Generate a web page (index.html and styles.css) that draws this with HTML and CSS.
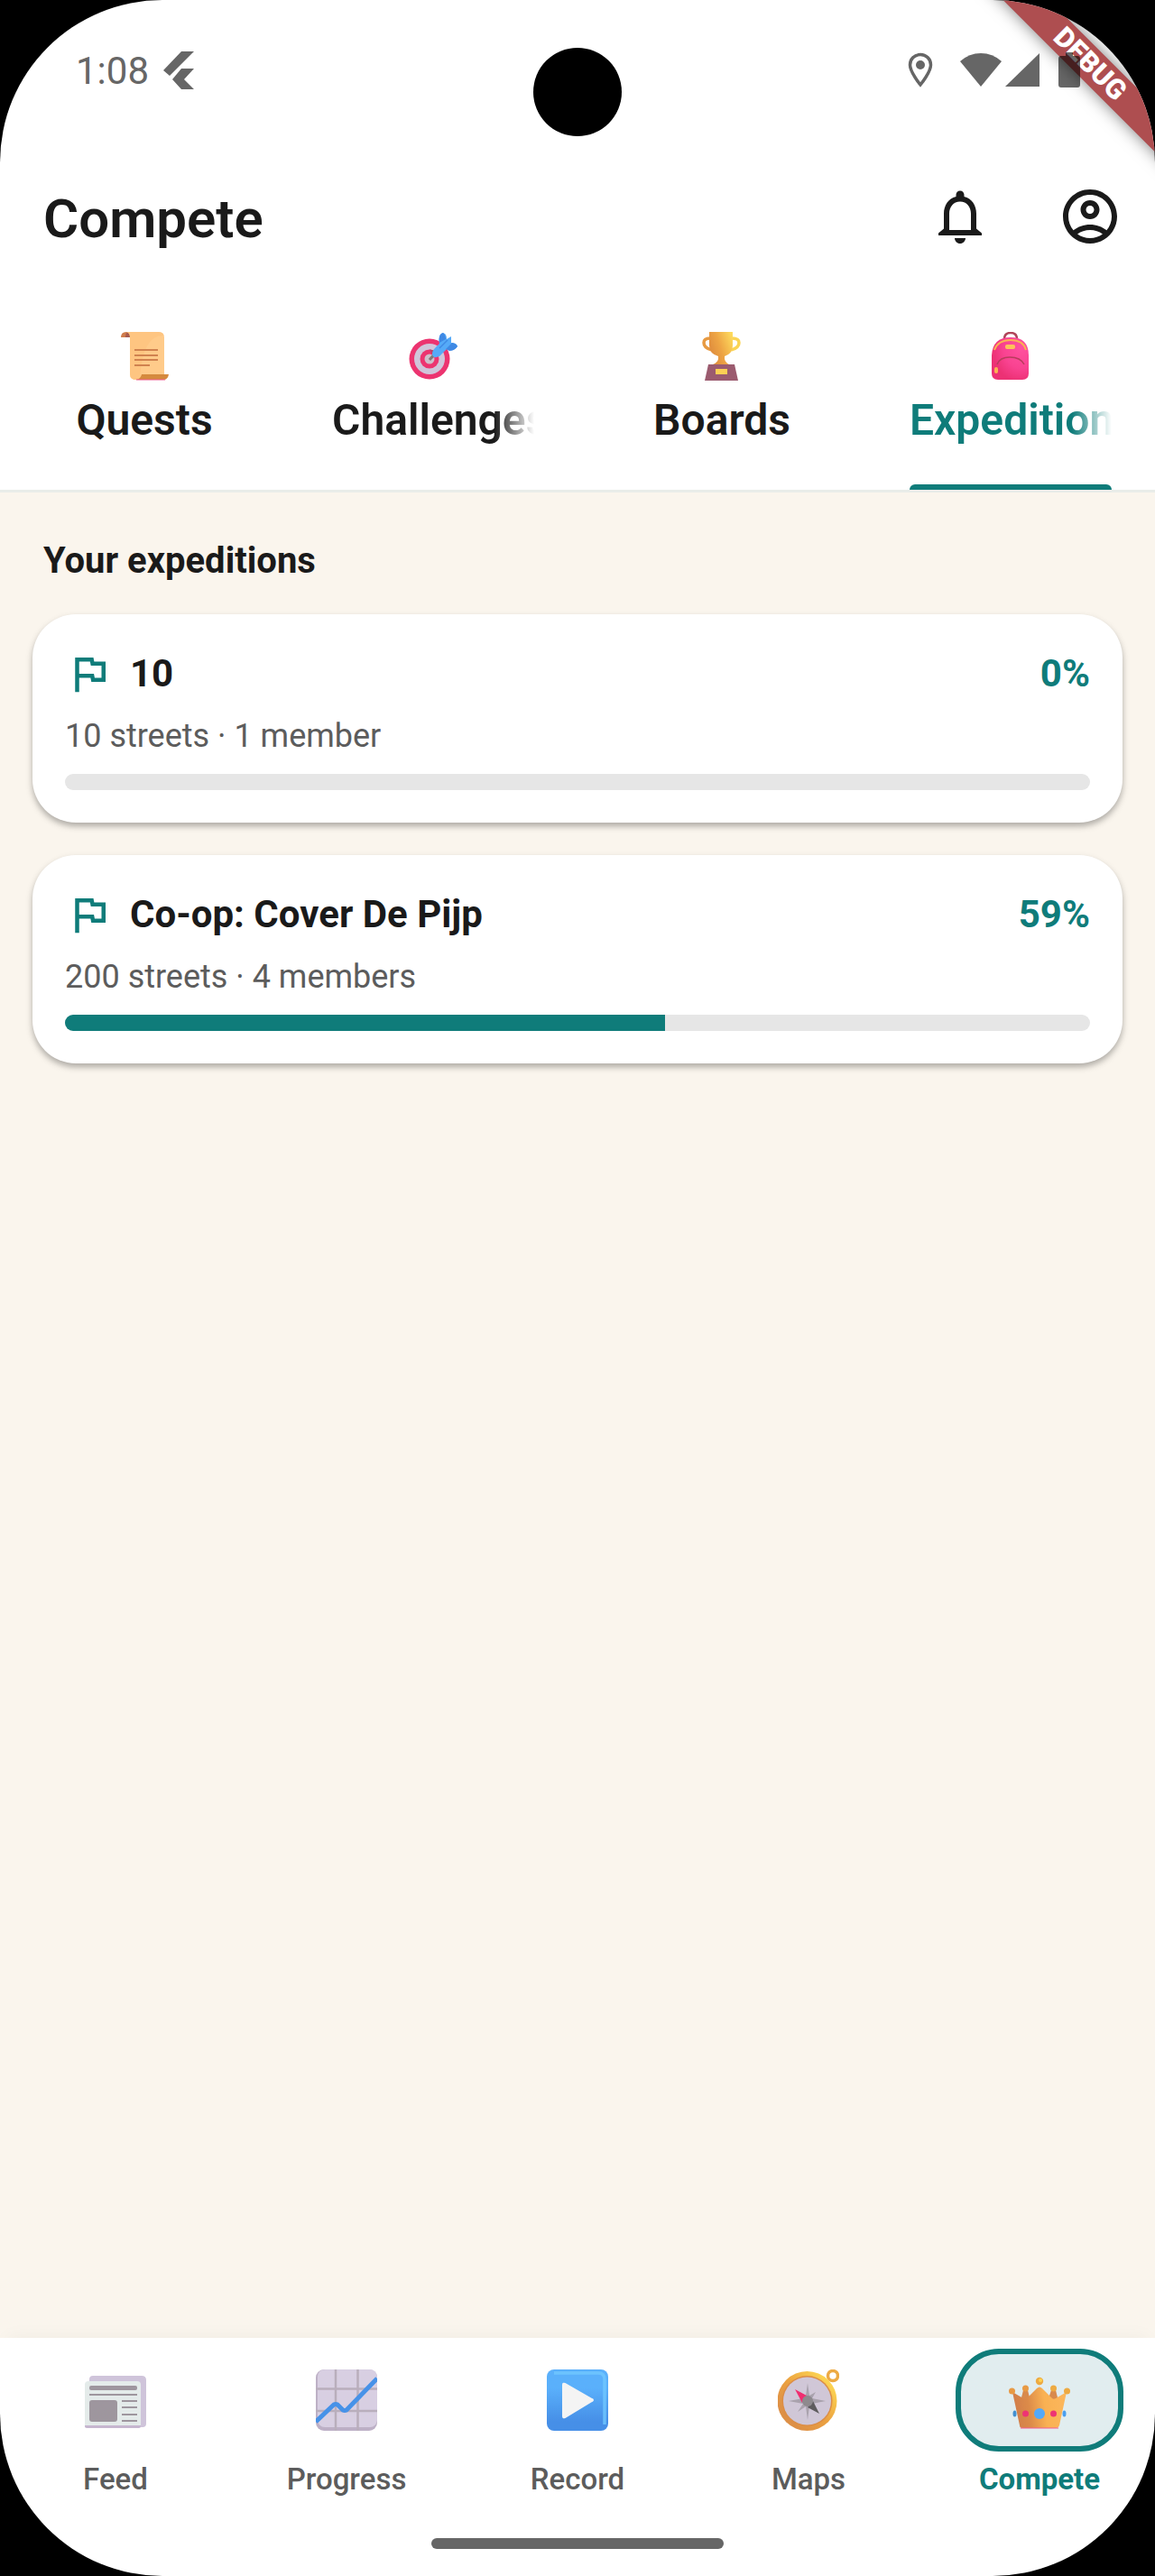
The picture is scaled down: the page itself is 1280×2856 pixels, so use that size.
FILE: index.html
```html
<!DOCTYPE html>
<html lang="en">
  <head>
    <meta charset="UTF-8" />
    <meta name="viewport" content="width=device-width, initial-scale=1.0" />
    <title>Compete</title>
    <link rel="stylesheet" href="styles.css">
  </head>
  <body>
    <div class="screen">
      <div class="debug-banner">DEBUG</div>
      <div class="camera"></div>

      <div class="status-bar">
        <span class="time">1:08</span>
        <svg class="flutter-icon" width="34" height="42" viewBox="0 0 34 42"><path d="M20 0h14L7 27 0 21zM20 19h14L23 31l11 11H20L10 31z" /></svg>
        <div class="status-icons">
          <svg width="28" height="40" viewBox="0 0 28 40">
            <path d="M14 2.500C7.500 2.500 2.500 7.500 2.500 14c0 8 11.500 22 11.500 22s11.500-14 11.500-22c0-6.500-5-11.500-11.500-11.500z" fill="none" stroke="#666" stroke-width="3.500" />
            <circle cx="14" cy="14" r="5" />
          </svg>
          <svg class="wifi" width="46" height="40" viewBox="0 0 46 40"><path d="M0 10Q10 1 23 1t23 9L23 38z" /></svg>
          <svg class="signal" width="38" height="40" viewBox="0 0 38 40"><path d="M38 1v37H0z" /></svg>
          <svg class="battery" width="24" height="40" viewBox="0 0 24 40"><path d="M8 0h8v4h5q3 0 3 3v29q0 3-3 3H3q-3 0-3-3V7q0-3 3-3h5z" /></svg>
        </div>
      </div>

      <header class="app-bar">
        <h1>Compete</h1>
        <button class="icon-button" aria-label="Notifications">
          <svg width="72" height="72" viewBox="0 0 24 24"><path d="M12 22c1.100 0 2-.9 2-2h-4c0 1.100.9 2 2 2zM18 16.500V11c0-3.070-1.630-5.640-4.500-6.320V4c0-.83-.67-1.500-1.500-1.500s-1.500.67-1.500 1.500v.68C7.640 5.360 6 7.920 6 11v5.500L4 18.200V19h16v-.8zM16 17H8v-6c0-2.480 1.510-4.500 4-4.500s4 2.020 4 4.500z" /></svg>
        </button>
        <button class="icon-button" aria-label="Account">
          <svg width="72" height="72" viewBox="0 0 24 24"><path d="M12 2C6.480 2 2 6.480 2 12s4.480 10 10 10 10-4.480 10-10S17.520 2 12 2zM7.350 18.500C8.660 17.560 10.260 17 12 17s3.340.56 4.650 1.500C15.340 19.440 13.740 20 12 20s-3.340-.56-4.650-1.500zm10.790-1.380C16.450 15.800 14.320 15 12 15s-4.450.8-6.140 2.120C4.700 15.730 4 13.950 4 12c0-4.420 3.580-8 8-8s8 3.580 8 8c0 1.950-.7 3.730-1.860 5.120z" /><path d="M12 6c-1.930 0-3.500 1.570-3.500 3.500S10.070 13 12 13s3.500-1.570 3.500-3.500S13.930 6 12 6zm0 5c-.83 0-1.500-.67-1.500-1.500S11.170 8 12 8s1.500.67 1.500 1.500S12.830 11 12 11z" /></svg>
        </button>
      </header>

      <div class="tabs" role="tablist">
        <button class="tab" role="tab">
          <svg width="54" height="54" viewBox="0 0 54 54">
            <path d="M1 6Q1 0 7 0h6v6z" fill="#cf7c4c" />
            <path d="M6 6q0-5 3-6l3 6z" fill="#a85a4e" />
            <path d="M7 0h36q6 0 6 6v43H24q-2 4-6 4-7 0-7-6V6q0-5-4-6z" fill="#ffcb8a" />
            <path d="M7 0h36q4 0 5.500 4Q25 3 22 52q-2 1-4 1-7 0-7-6V6q0-5-4-6z" fill="#fdc27c" opacity=".6" />
            <path d="M24 47h30q-1 6-6 6H18q5-1 6-6z" fill="#d58a3e" />
            <path d="M18 53h32" stroke="#ee5a8c" />
            <path d="M16 20h26M16 26h26M16 31h26M16 37h17" stroke="#d0824f" stroke-width="2" />
          </svg>
          <span class="tab-label">Quests</span>
        </button>
        <button class="tab" role="tab">
          <svg width="54" height="54" viewBox="0 0 54 54">
            <circle cx="23" cy="30" r="22.500" fill="#ec3470" />
            <circle cx="23" cy="30" r="17" fill="#d0c5da" />
            <circle cx="23" cy="30" r="10.500" fill="#ec3470" />
            <circle cx="23" cy="30" r="5.500" fill="#cdbfcb" />
            <path d="M23 19l4 8-3 4 11-8z" fill="#a84a62" opacity=".7" />
            <path d="M23 31l6-7" stroke="#817878" stroke-width="3" />
            <path d="M26 25c0-5 3-7 8-12-1-6 0-10 4-12 3 1 4 3 4 7l5-3v7c4 0 6 1 7 4-3 4-7 5-12 3l-8 8q-7 3-8-2z" fill="#55aaf8" />
            <path d="M34 12c-1-6 0-10 4-11 2 2 3 4 3 7zM41 19l7-7q5 1 6 4-3 5-9 5z" fill="#3f89e4" />
            <path d="M34 18l9-9" stroke="#3f89e4" stroke-width="1.500" />
          </svg>
          <span class="tab-label fade">Challenges</span>
        </button>
        <button class="tab" role="tab">
          <svg width="54" height="54" viewBox="0 0 54 54">
            <defs>
              <linearGradient id="cup" x1="0" y1=".5" x2="1" y2="0"><stop offset="0" stop-color="#df8d3e" /><stop offset=".4" stop-color="#eea544" /><stop offset="1" stop-color="#ffe060" /></linearGradient>
            </defs>
            <path d="M14 7q-7 0-7 5 0 6 9 8" fill="none" stroke="#e79a42" stroke-width="3.500" />
            <path d="M38 7q8 0 8 5 0 6-9 8" fill="none" stroke="#fad455" stroke-width="3.500" />
            <path d="M13 0h26v15q0 9-9 12v3q1 4 5 6H17q5-2 6-6v-3q-10-3-10-12z" fill="url(#cup)" />
            <path d="M12 36h29l4 18H8z" fill="#9b5b6f" />
            <path d="M20 41h13v6H20z" fill="#fccf54" />
          </svg>
          <span class="tab-label">Boards</span>
        </button>
        <button class="tab active" role="tab" aria-selected="true">
          <svg width="54" height="54" viewBox="0 0 54 54">
            <defs>
              <radialGradient id="bag" cx=".8" cy=".25" r=".8"><stop offset="0" stop-color="#ff529f" /><stop offset=".6" stop-color="#f94391" /><stop offset="1" stop-color="#ec3174" /></radialGradient>
            </defs>
            <path d="M20 8q0-7 7-7t7 7" fill="none" stroke="#b0455a" stroke-width="2.500" />
            <path d="M6 26Q7 6 27 6t20 20v20q0 7-7 7H13q-7 0-7-7z" fill="url(#bag)" />
            <path d="M9 20Q13 9 27 9t17 11" fill="none" stroke="#fbb153" stroke-width="2" />
            <rect x="21" y="14" width="11" height="5" rx="2" fill="#fdc159" />
            <path d="M12 36q3-8 14-8 12 0 16 8" fill="none" stroke="#b83d5c" stroke-width="1.500" />
            <rect x="9" y="39" width="4" height="7" rx="2" fill="#fbb153" />
          </svg>
          <span class="tab-label fade">Expeditions</span>
        </button>
      </div>

      <main class="content">
        <h2>Your expeditions</h2>

        <section class="card">
          <div class="card-top">
            <svg class="flag" width="54" height="54" viewBox="0 0 24 24"><path d="M12.360 6l.4 2H18v6h-3.360l-.4-2H7V6h5.360M14 4H5v17h2v-7h5.600l.4 2h7V6h-5.600L14 4z" /></svg>
            <h3>10</h3>
            <span class="percent">0%</span>
          </div>
          <p>10 streets · 1 member</p>
          <div class="bar" role="progressbar" aria-valuenow="0" aria-label="10"></div>
        </section>

        <section class="card">
          <div class="card-top">
            <svg class="flag" width="54" height="54" viewBox="0 0 24 24"><path d="M12.360 6l.4 2H18v6h-3.360l-.4-2H7V6h5.360M14 4H5v17h2v-7h5.600l.4 2h7V6h-5.600L14 4z" /></svg>
            <h3>Co-op: Cover De Pijp</h3>
            <span class="percent">59%</span>
          </div>
          <p>200 streets · 4 members</p>
          <div class="bar" role="progressbar" aria-valuenow="59" aria-label="Co-op: Cover De Pijp">
            <div class="bar-fill" style="width: 58.5%"></div>
          </div>
        </section>
      </main>

      <nav class="bottom-nav">
        <a class="nav-item" href="#feed">
          <span class="nav-icon">
            <svg width="68" height="68" viewBox="0 0 68 68">
              <path d="M5 13V11q0-4 4-4h54q5 0 5 5v48q0 4-4 4H30z" fill="#cfc4da" />
              <path d="M0 17q0-4 4-4h54q4 0 4 4v47H0z" fill="#e4ebea" />
              <path d="M0 62h62v1q0 2-2 2H2q-2 0-2-2z" fill="#c6b6cf" />
              <rect x="5" y="18" width="53" height="5" rx="2" fill="#9e969e" />
              <path d="M5 28h53M41 35h17M41 42h17M41 50h17M41 57h17" stroke="#9e969e" stroke-width="2" />
              <rect x="5" y="34" width="31" height="24" rx="3" fill="#9e969e" />
            </svg>
          </span>
          Feed
        </a>
        <a class="nav-item" href="#progress">
          <span class="nav-icon">
            <svg width="68" height="68" viewBox="0 0 68 68">
              <rect width="68" height="68" rx="9" fill="#bdb0c6" />
              <rect x="2" width="66" height="64" rx="8" fill="#d8cfe2" />
              <path d="M22 0v68M46.500 0v68M0 21.500h68M0 46h68" stroke="#b9aebc" stroke-width="2.500" />
              <path d="M0 58l20-19q2-1 4 0l6 6q2 1 4 0L68 10" fill="none" stroke="#4792e8" stroke-width="5" />
            </svg>
          </span>
          Progress
        </a>
        <a class="nav-item" href="#record">
          <span class="nav-icon">
            <svg width="68" height="68" viewBox="0 0 68 68">
              <defs>
                <linearGradient id="rec" x1="0" y1="0" x2="0" y2="1"><stop offset=".3" stop-color="#5ab0fb" /><stop offset=".85" stop-color="#468fe7" /></linearGradient>
              </defs>
              <rect width="68" height="68" rx="8" fill="url(#rec)" />
              <path d="M8 4h49q7 0 7 7v50" fill="none" stroke="#70c8ff" stroke-width="3.500" opacity=".8" />
              <path d="M18 17q0-2 2-1l30 17q2 1 0 2L20 53q-2 1-2-1z" fill="#f4f4f4" stroke="#f4f4f4" stroke-width="2" />
            </svg>
          </span>
          Record
        </a>
        <a class="nav-item" href="#maps">
          <span class="nav-icon">
            <svg width="68" height="68" viewBox="0 0 68 68">
              <defs>
                <linearGradient id="rim" x1="0" y1="1" x2="1" y2="0"><stop offset=".2" stop-color="#dd9047" /><stop offset=".5" stop-color="#eba140" /><stop offset=".9" stop-color="#ffdc55" /></linearGradient>
              </defs>
              <circle cx="61" cy="7" r="5.500" fill="none" stroke="#edaa44" stroke-width="3.500" />
              <circle cx="32.500" cy="35" r="33" fill="url(#rim)" />
              <circle cx="32.500" cy="35" r="28" fill="#dc8d45" />
              <circle cx="32.500" cy="35" r="26.500" fill="#d0c7d7" />
              <path d="M33 15l2 14 7-4-4 7 15 3-15 3 4 7-7-4-2 15-2-15-9 6 6-9-16-3 16-3-4-7 7 4z" fill="#a9a2ad" />
              <path d="M19 22l13 7-5 8z" fill="#f02e70" />
              <path d="M46 49l-13-7 6-7z" fill="#5e5c5e" />
              <circle cx="33" cy="35" r="6" fill="#8e8a8e" />
            </svg>
          </span>
          Maps
        </a>
        <a class="nav-item active" href="#compete">
          <span class="nav-icon">
            <svg width="68" height="68" viewBox="0 0 68 68">
              <defs>
                <linearGradient id="crown" x1="0" y1=".5" x2="1" y2=".4"><stop offset="0" stop-color="#d07c4a" /><stop offset=".3" stop-color="#dc8b49" /><stop offset=".6" stop-color="#f9b153" /><stop offset="1" stop-color="#fcb75c" /></linearGradient>
              </defs>
              <path d="M16 23h5l3 12H13zM47 23h5l3 12H43z" fill="#d88a4d" />
              <path d="M4 25l12 7q3 2 5-1l10-10q3-3 6 0l10 10q2 3 5 1l12-7-8 37q-1 3-3 3H15q-3 0-3-3z" fill="url(#crown)" />
              <path d="M13 65h42" stroke="#f45a91" />
              <circle cx="3.500" cy="24" r="3.500" fill="#e89a44" />
              <circle cx="18.500" cy="21" r="3.500" fill="#e89a44" />
              <circle cx="34" cy="13" r="4.200" fill="#edaa42" />
              <circle cx="35" cy="12" r="2" fill="#ffd34f" />
              <circle cx="49.500" cy="21" r="3.500" fill="#edaa42" />
              <circle cx="64.500" cy="24" r="3.500" fill="#edaa42" />
              <ellipse cx="6.500" cy="49" rx="2" ry="3.500" fill="#4390d0" />
              <ellipse cx="61.500" cy="49" rx="2" ry="3.500" fill="#4b9fee" />
              <circle cx="18.500" cy="49" r="3.500" fill="#ee3374" />
              <circle cx="49.500" cy="49" r="3.500" fill="#ee3374" />
              <circle cx="34" cy="49" r="6" fill="#53a9f8" />
            </svg>
          </span>
          Compete
        </a>
      </nav>
      <div class="home-indicator"></div>
    </div>
  </body>
</html>
```

FILE: styles.css
```css
body {
  margin: 0;
  background-color: #000;
  color: #1a1a1a;
  font-family: Roboto, sans-serif;
}
h1, h2, h3, p {
  margin: 0;
}
button {
  border: 0;
  padding: 0;
  background: none;
  color: inherit;
  font-family: inherit;
}
svg {
  display: block;
  flex-shrink: 0;
}
.screen {
  position: relative;
  display: flex;
  flex-direction: column;
  min-height: 100vh;
  border-radius: 180px;
  overflow: hidden;
  background-color: #fff;
}

/* overlays */
.camera {
  position: absolute;
  top: 53px;
  left: 50%;
  width: 98px;
  height: 98px;
  margin-left: -49px;
  border-radius: 50%;
  background-color: #000;
}
.debug-banner {
  position: absolute;
  top: 53px;
  right: -88px;
  width: 320px;
  line-height: 36px;
  transform: rotate(45deg);
  background-color: #ae4e50;
  box-shadow: 0 0 18px rgba(0, 0, 0, 0.5);
  color: #fff;
  font-size: 31px;
  font-weight: 900;
  text-align: center;
}

.status-bar {
  position: relative;
  display: flex;
  align-items: center;
  height: 156px;
  padding: 0 83px 0 84px;
  box-sizing: border-box;
  color: #666;
}
.status-bar svg {
  fill: #666;
}
.time {
  font-size: 42px;
}
.flutter-icon {
  margin-left: 16px;
}
.status-icons {
  display: flex;
  margin-left: auto;
}
.wifi {
  margin-left: 30px;
}
.signal {
  margin-left: 4px;
}
.status-bar .battery {
  margin-left: 21px;
  fill: rgba(0, 0, 0, 0.6);
}

.app-bar {
  display: flex;
  align-items: center;
  height: 168px;
  padding-left: 48px;
}
h1 {
  flex: 1;
  padding-top: 4px;
  font-size: 60px;
  font-weight: 600;
}
.icon-button {
  display: flex;
  justify-content: center;
  width: 144px;
}
.icon-button svg {
  fill: #1a1a1a;
}

.tabs {
  display: grid;
  grid-template-columns: repeat(4, 1fr);
  border-bottom: 3px solid #e9ece9;
}
.tab {
  position: relative;
  display: flex;
  flex-direction: column;
  align-items: center;
  gap: 12px;
  min-width: 0;
  padding: 44px 48px 45px;
  font-size: 48px;
  font-weight: 600;
  line-height: 64px;
}
.tab-label {
  max-width: 100%;
  overflow: hidden;
  white-space: nowrap;
}
.fade {
  -webkit-mask-image: linear-gradient(to right, #000 calc(100% - 44px), transparent);
  mask-image: linear-gradient(to right, #000 calc(100% - 44px), transparent);
}
.tab.active {
  color: #0f7c7a;
}
.tab.active::after {
  content: "";
  position: absolute;
  left: 48px;
  right: 48px;
  bottom: 0;
  height: 6px;
  border-radius: 9px 9px 0 0;
  background-color: #0f7c7a;
}

.content {
  flex: 1;
  padding: 46px 36px;
  background-color: #faf5ed;
}
h2 {
  padding: 0 12px;
  margin-bottom: 29px;
  font-size: 40px;
  line-height: 60px;
}
.card {
  padding: 36px;
  margin-bottom: 36px;
  border-radius: 48px;
  background-color: #fff;
  box-shadow: 0 4px 6px rgba(0, 0, 0, 0.26), 0 4px 12px rgba(0, 0, 0, 0.06);
}
.card-top {
  display: flex;
  align-items: center;
  font-size: 42px;
  font-weight: 700;
  line-height: 60px;
}
.flag {
  margin-right: 18px;
  fill: #0f7c7a;
}
h3 {
  flex: 1;
  font-size: 42px;
}
.percent {
  color: #0f7c7a;
}
.card p {
  margin: 14px 0 16px;
  color: #5c5c5c;
  font-size: 36px;
  line-height: 51px;
}
.bar {
  height: 18px;
  border-radius: 9px;
  overflow: hidden;
  background-color: #e6e6e6;
}
.bar-fill {
  height: 100%;
  background-color: #0f7c7a;
}

.bottom-nav {
  display: grid;
  grid-template-columns: repeat(5, 1fr);
  padding: 12px 0 43px;
  box-shadow: 0 -10px 18px -8px rgba(0, 0, 0, 0.04);
}
.nav-item {
  display: flex;
  flex-direction: column;
  align-items: center;
  gap: 9px;
  color: #5c5c5c;
  font-size: 33px;
  font-weight: 500;
  line-height: 44px;
  text-decoration: none;
}
.nav-icon {
  display: flex;
  align-items: center;
  justify-content: center;
  width: 186px;
  height: 114px;
  box-sizing: border-box;
  border: 6px solid transparent;
  border-radius: 48px;
}
.nav-item.active {
  color: #0f7c7a;
  font-weight: 700;
}
.active .nav-icon {
  border-color: #0f7c7a;
  background-color: #e1edef;
}
.home-indicator {
  width: 324px;
  height: 12px;
  margin: 0 auto 30px;
  border-radius: 6px;
  background-color: #666;
}
```
